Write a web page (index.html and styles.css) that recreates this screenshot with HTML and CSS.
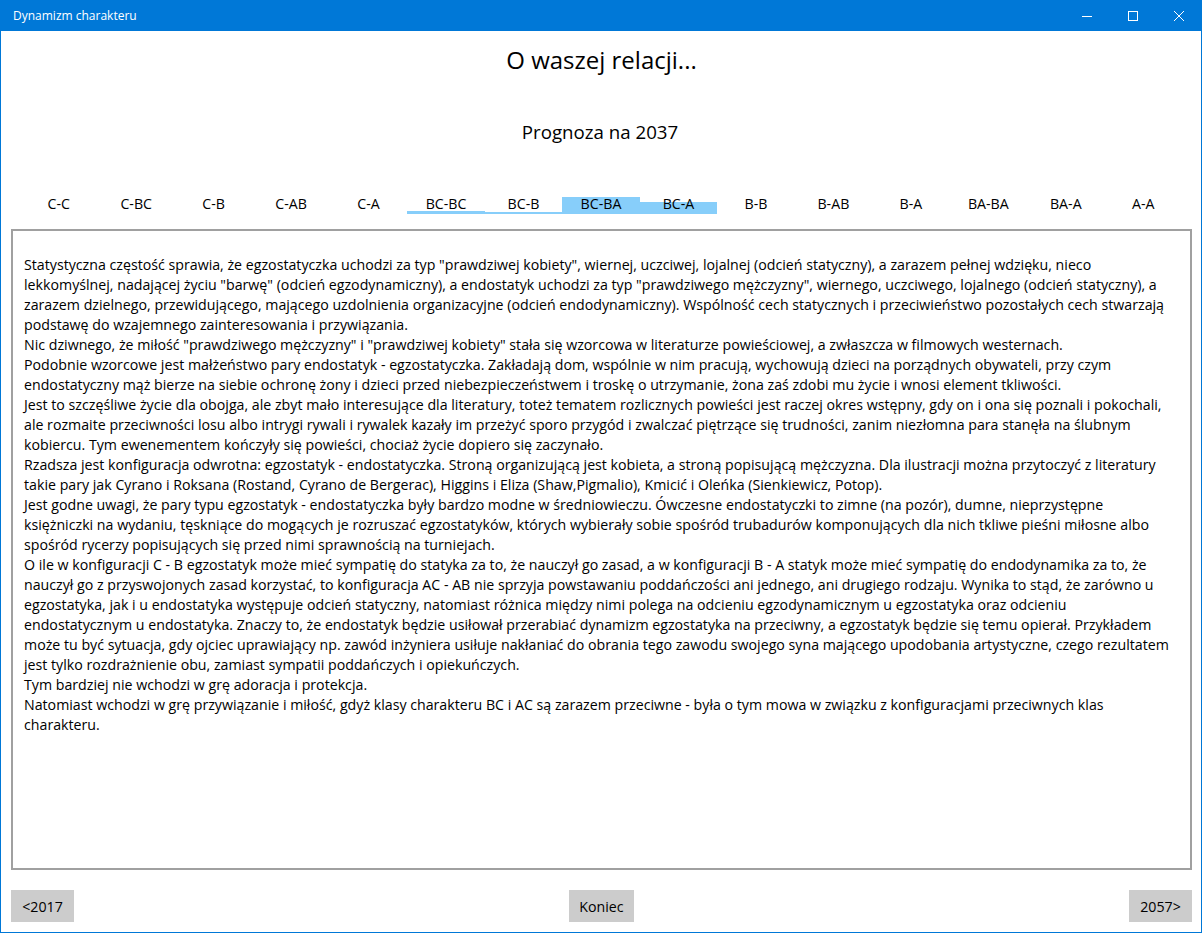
FILE: index.html
```html
<!DOCTYPE html>
<html lang="pl">
<head>
<meta charset="utf-8">
<title>Dynamizm charakteru</title>
<link rel="stylesheet" href="styles.css">
</head>
<body>
<div class="window">
  <header class="titlebar">
    <span class="title">Dynamizm charakteru</span>
    <div class="controls">
      <span class="ctl"><svg width="10" height="10" viewBox="0 0 10 10"><path d="M0 5.5H10" stroke="#fff" stroke-width="1"/></svg></span>
      <span class="ctl"><svg width="10" height="10" viewBox="0 0 10 10"><rect x="0.5" y="0.5" width="9" height="9" fill="none" stroke="#fff" stroke-width="1"/></svg></span>
      <span class="ctl"><svg width="10" height="10" viewBox="0 0 10 10"><path d="M0 0L10 10M10 0L0 10" stroke="#fff" stroke-width="1"/></svg></span>
    </div>
  </header>
  <main class="content">
    <h1 class="heading">O waszej relacji...</h1>
    <h2 class="subheading">Prognoza na 2037</h2>
    <div class="tabs">
      <div class="tab"><span class="label">C-C</span></div>
      <div class="tab"><span class="label">C-BC</span></div>
      <div class="tab"><span class="label">C-B</span></div>
      <div class="tab"><span class="label">C-AB</span></div>
      <div class="tab"><span class="label">C-A</span></div>
      <div class="tab"><span class="bar" style="height:3px"></span><span class="label">BC-BC</span></div>
      <div class="tab"><span class="bar" style="height:2px"></span><span class="label">BC-B</span></div>
      <div class="tab"><span class="bar" style="height:17px"></span><span class="label">BC-BA</span></div>
      <div class="tab"><span class="bar" style="height:12px"></span><span class="label">BC-A</span></div>
      <div class="tab"><span class="label">B-B</span></div>
      <div class="tab"><span class="label">B-AB</span></div>
      <div class="tab"><span class="label">B-A</span></div>
      <div class="tab"><span class="label">BA-BA</span></div>
      <div class="tab"><span class="label">BA-A</span></div>
      <div class="tab"><span class="label">A-A</span></div>
    </div>
    <div class="textbox">
      <p>Statystyczna częstość sprawia, że egzostatyczka uchodzi za typ "prawdziwej kobiety", wiernej, uczciwej, lojalnej (odcień statyczny), a zarazem pełnej wdzięku, nieco<br>
      lekkomyślnej, nadającej życiu "barwę" (odcień egzodynamiczny), a endostatyk uchodzi za typ "prawdziwego mężczyzny", wiernego, uczciwego, lojalnego (odcień statyczny), a<br>
      zarazem dzielnego, przewidującego, mającego uzdolnienia organizacyjne (odcień endodynamiczny). Wspólność cech statycznych i przeciwieństwo pozostałych cech stwarzają<br>
      podstawę do wzajemnego zainteresowania i przywiązania.</p>
      <p>Nic dziwnego, że miłość "prawdziwego mężczyzny" i "prawdziwej kobiety" stała się wzorcowa w literaturze powieściowej, a zwłaszcza w filmowych westernach.</p>
      <p>Podobnie wzorcowe jest małżeństwo pary endostatyk - egzostatyczka. Zakładają dom, wspólnie w nim pracują, wychowują dzieci na porządnych obywateli, przy czym<br>
      endostatyczny mąż bierze na siebie ochronę żony i dzieci przed niebezpieczeństwem i troskę o utrzymanie, żona zaś zdobi mu życie i wnosi element tkliwości.</p>
      <p>Jest to szczęśliwe życie dla obojga, ale zbyt mało interesujące dla literatury, toteż tematem rozlicznych powieści jest raczej okres wstępny, gdy on i ona się poznali i pokochali,<br>
      ale rozmaite przeciwności losu albo intrygi rywali i rywalek kazały im przeżyć sporo przygód i zwalczać piętrzące się trudności, zanim niezłomna para stanęła na ślubnym<br>
      kobiercu. Tym ewenementem kończyły się powieści, chociaż życie dopiero się zaczynało.</p>
      <p>Rzadsza jest konfiguracja odwrotna: egzostatyk - endostatyczka. Stroną organizującą jest kobieta, a stroną popisującą mężczyzna. Dla ilustracji można przytoczyć z literatury<br>
      takie pary jak Cyrano i Roksana (Rostand, Cyrano de Bergerac), Higgins i Eliza (Shaw,Pigmalio), Kmicić i Oleńka (Sienkiewicz, Potop).</p>
      <p>Jest godne uwagi, że pary typu egzostatyk - endostatyczka były bardzo modne w średniowieczu. Ówczesne endostatyczki to zimne (na pozór), dumne, nieprzystępne<br>
      księżniczki na wydaniu, tęskniące do mogących je rozruszać egzostatyków, których wybierały sobie spośród trubadurów komponujących dla nich tkliwe pieśni miłosne albo<br>
      spośród rycerzy popisujących się przed nimi sprawnością na turniejach.</p>
      <p>O ile w konfiguracji C - B egzostatyk może mieć sympatię do statyka za to, że nauczył go zasad, a w konfiguracji B - A statyk może mieć sympatię do endodynamika za to, że<br>
      nauczył go z przyswojonych zasad korzystać, to konfiguracja AC - AB nie sprzyja powstawaniu poddańczości ani jednego, ani drugiego rodzaju. Wynika to stąd, że zarówno u<br>
      egzostatyka, jak i u endostatyka występuje odcień statyczny, natomiast różnica między nimi polega na odcieniu egzodynamicznym u egzostatyka oraz odcieniu<br>
      endostatycznym u endostatyka. Znaczy to, że endostatyk będzie usiłował przerabiać dynamizm egzostatyka na przeciwny, a egzostatyk będzie się temu opierał. Przykładem<br>
      może tu być sytuacja, gdy ojciec uprawiający np. zawód inżyniera usiłuje nakłaniać do obrania tego zawodu swojego syna mającego upodobania artystyczne, czego rezultatem<br>
      jest tylko rozdrażnienie obu, zamiast sympatii poddańczych i opiekuńczych.</p>
      <p>Tym bardziej nie wchodzi w grę adoracja i protekcja.</p>
      <p>Natomiast wchodzi w grę przywiązanie i miłość, gdyż klasy charakteru BC i AC są zarazem przeciwne - była o tym mowa w związku z konfiguracjami przeciwnych klas<br>
      charakteru.</p>
    </div>
    <footer class="actions">
      <button class="btn">&lt;2017</button>
      <button class="btn btn-wide">Koniec</button>
      <button class="btn">2057&gt;</button>
    </footer>
  </main>
</div>
</body>
</html>
```
FILE: styles.css
```css
* { box-sizing: border-box; }
html, body { margin: 0; padding: 0; }
body {
  width: 1202px;
  height: 933px;
  background: #fff;
  font-family: "Open Sans", "Noto Sans", sans-serif;
  color: #000;
  overflow: hidden;
}
.window {
  width: 1202px;
  height: 933px;
  border: 1px solid #0078d7;
  border-top: none;
  display: flex;
  flex-direction: column;
}
.titlebar {
  height: 31px;
  margin: 0 -1px;
  background: #0078d7;
  color: #fff;
  display: flex;
  align-items: center;
  justify-content: space-between;
  flex: none;
}
.title {
  font-size: 12px;
  padding-left: 13px;
  padding-bottom: 1px;
}
.controls { display: flex; height: 100%; }
.ctl {
  width: 46px;
  height: 100%;
  display: flex;
  align-items: center;
  justify-content: center;
}
.content {
  flex: 1;
  display: flex;
  flex-direction: column;
  padding: 0 9px 0 10px;
}
.heading {
  margin: 14px 0 0;
  font-size: 24px;
  line-height: 30px;
  font-weight: 400;
  text-align: center;
}
.subheading {
  margin: 44px 0 0;
  font-size: 18.7px;
  line-height: 26px;
  font-weight: 400;
  text-align: center;
  padding-right: 3px;
}
.tabs {
  margin: 45px 10px 0 9px;
  display: grid;
  grid-template-columns: repeat(15, 1fr);
  height: 24px;
}
.tab {
  display: grid;
  align-items: end;
}
.tab > * { grid-area: 1 / 1; }
.bar { background: #87cefa; align-self: end; }
.label {
  font-size: 14.2px;
  line-height: 20px;
  text-align: center;
  align-self: start;
  padding-top: 4px;
}
.textbox {
  margin-top: 15px;
  height: 641px;
  border: 2px solid #a0a0a0;
  padding: 24px 8px 0 11px;
  font-size: 14.2px;
  line-height: 20px;
}
.textbox p { margin: 0; }
.actions {
  margin-top: 20px;
  display: flex;
  justify-content: space-between;
  align-items: center;
}
.btn {
  width: 63px;
  height: 32px;
  background: #cccccc;
  border: none;
  font-family: inherit;
  font-size: 14.2px;
  color: #000;
  padding: 0;
  margin: 0;
}
.btn-wide { width: 65px; }
```
